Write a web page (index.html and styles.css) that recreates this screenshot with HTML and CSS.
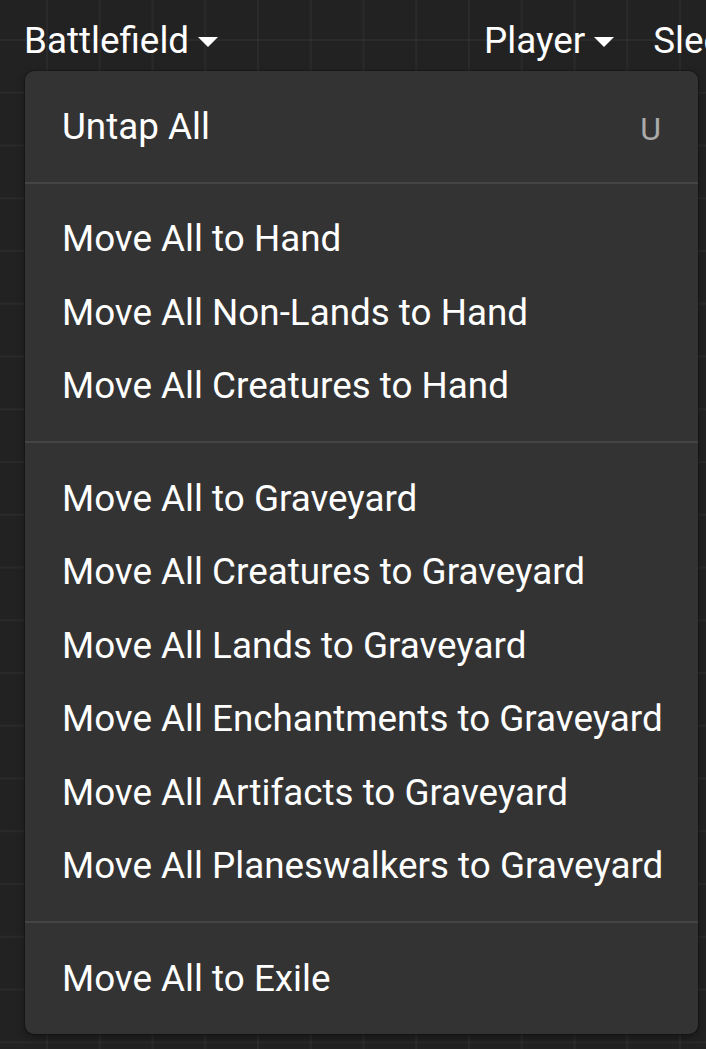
FILE: index.html
```html
<!DOCTYPE html>
<html>
<head>
<meta charset="utf-8">
<link rel="stylesheet" href="styles.css">
</head>
<body>
<div class="page">
  <nav class="navbar">
    <div class="nav-item">Battlefield<span class="caret"></span></div>
    <div class="nav-item nav-player">Player<span class="caret"></span></div>
    <div class="nav-item">Sleeve</div>
  </nav>
  <div class="dropdown">
    <div class="item"><span>Untap All</span><span class="shortcut">U</span></div>
    <div class="divider"></div>
    <div class="item">Move All to Hand</div>
    <div class="item">Move All Non-Lands to Hand</div>
    <div class="item">Move All Creatures to Hand</div>
    <div class="divider"></div>
    <div class="item">Move All to Graveyard</div>
    <div class="item">Move All Creatures to Graveyard</div>
    <div class="item">Move All Lands to Graveyard</div>
    <div class="item">Move All Enchantments to Graveyard</div>
    <div class="item">Move All Artifacts to Graveyard</div>
    <div class="item">Move All Planeswalkers to Graveyard</div>
    <div class="divider"></div>
    <div class="item">Move All to Exile</div>
  </div>
</div>
</body>
</html>
```
FILE: styles.css
```css
html, body {
  margin: 0;
  padding: 0;
}
body {
  width: 706px;
  height: 1049px;
  overflow: hidden;
  background-color: #222222;
  background-image:
    linear-gradient(to right, rgba(255,255,255,0.035) 2px, transparent 2px),
    linear-gradient(to bottom, rgba(255,255,255,0.035) 2px, transparent 2px);
  background-size: 52.75px 52.75px;
  background-position: 46px 39px;
  font-family: Roboto, "Liberation Sans", sans-serif;
  color: #ffffff;
}
.page {
  position: relative;
  width: 706px;
  height: 1049px;
}
.navbar {
  display: flex;
  flex-wrap: nowrap;
  white-space: nowrap;
  overflow: hidden;
  padding: 17px 0 0 24px;
  gap: 39px;
  font-size: 36.8px;
  line-height: 48px;
}
.nav-item {
  display: flex;
  align-items: center;
  flex: none;
}
.nav-player {
  margin-left: 227px;
}
.caret {
  display: inline-block;
  width: 0;
  height: 0;
  margin-left: 9px;
  border-top: 10.5px solid #ffffff;
  border-left: 10.5px solid transparent;
  border-right: 10.5px solid transparent;
  margin-top: 2px;
}
.dropdown {
  position: absolute;
  left: 25px;
  top: 71px;
  width: 673px;
  box-sizing: border-box;
  padding: 18.5px 0;
  background: #333333;
  border-radius: 9px;
  box-shadow: 0 0 0 1px rgba(0,0,0,0.25), 0 4px 10px rgba(0,0,0,0.35);
  font-size: 36.8px;
}
.item {
  display: flex;
  justify-content: space-between;
  align-items: center;
  height: 73.5px;
  padding: 0 37px 0 37px;
  color: #ffffff;
  white-space: nowrap;
}
.shortcut {
  color: #aaaaaa;
  font-size: 32px;
  margin-top: 6px;
}
.divider {
  height: 2px;
  margin: 18.5px 0;
  background: #444444;
}
```
